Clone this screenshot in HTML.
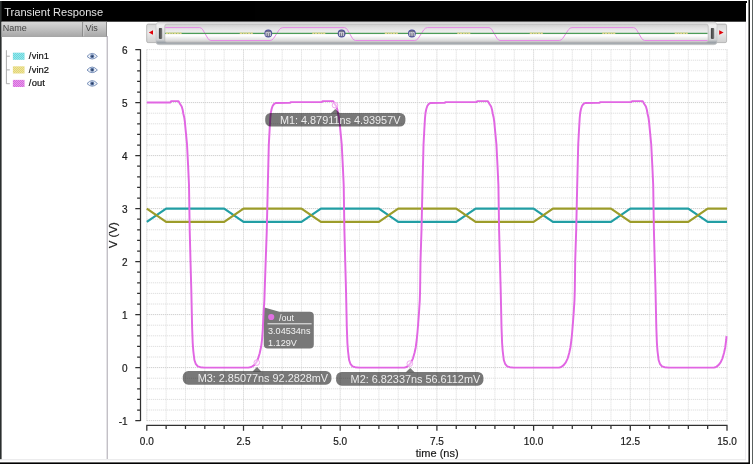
<!DOCTYPE html>
<html><head><meta charset="utf-8"><title>Transient Response</title>
<style>html,body{margin:0;padding:0;background:#fff;overflow:hidden}svg text{white-space:pre}</style></head>
<body>
<svg width="753" height="464" viewBox="0 0 753 464" style="display:block;will-change:transform;opacity:0.999">
<defs>
<linearGradient id="hdr" x1="0" y1="0" x2="0" y2="1"><stop offset="0" stop-color="#d8d8d8"/><stop offset="0.5" stop-color="#c0c0c0"/><stop offset="1" stop-color="#a6a6a6"/></linearGradient>
<linearGradient id="btn" x1="0" y1="0" x2="0" y2="1"><stop offset="0" stop-color="#d6d6d6"/><stop offset="0.45" stop-color="#ececec"/><stop offset="1" stop-color="#cfcfcf"/></linearGradient>
<linearGradient id="hnd" x1="0" y1="0" x2="0" y2="1"><stop offset="0" stop-color="#dcdcdc"/><stop offset="0.15" stop-color="#f0f0f0"/><stop offset="0.78" stop-color="#d0d2d4"/><stop offset="0.9" stop-color="#9ca2a8"/><stop offset="1" stop-color="#b0b4b8"/></linearGradient>
<linearGradient id="trk" x1="0" y1="0" x2="0" y2="1"><stop offset="0" stop-color="#cecece"/><stop offset="0.22" stop-color="#e2e2e2"/><stop offset="0.5" stop-color="#f0f0f0"/><stop offset="0.64" stop-color="#ffffff"/><stop offset="0.82" stop-color="#e6e6e6"/><stop offset="1" stop-color="#cccccc"/></linearGradient>
<linearGradient id="grip" x1="0" y1="0" x2="1" y2="0"><stop offset="0" stop-color="#3c3c3c"/><stop offset="1" stop-color="#787878"/></linearGradient>
<radialGradient id="mk" cx="0.5" cy="0.5" r="0.5"><stop offset="0" stop-color="#8c8c94"/><stop offset="0.62" stop-color="#74748a"/><stop offset="1" stop-color="#4646a0"/></radialGradient>
<pattern id="dot" width="2" height="2" patternUnits="userSpaceOnUse"><rect width="1" height="1" x="1" y="0" fill="#fff" opacity="0.35"/><rect width="1" height="1" x="0" y="1" fill="#fff" opacity="0.35"/></pattern>
</defs>
<rect width="753" height="464" fill="#fff"/>
<rect x="0" y="1" width="746" height="20.7" fill="#000"/>
<rect x="0" y="1" width="747" height="2" fill="#000"/>
<text x="4.2" y="16.4" font-size="11.1" fill="#e2e2e2" font-family="Liberation Sans, Arial, sans-serif">Transient Response</text>
<rect x="0" y="1" width="1.6" height="458.5" fill="#2a2e2e"/>
<rect x="745" y="22" width="1" height="438" fill="#f0eef2"/>
<rect x="748.4" y="0" width="1.6" height="464" fill="#111"/>
<rect x="748" y="0" width="0.5" height="464" fill="#888"/>
<rect x="752" y="0" width="1" height="464" fill="#5a605e"/>
<rect x="0" y="459.3" width="746" height="1" fill="#e4e4e6"/>
<rect x="0" y="462.4" width="750" height="1.6" fill="#000"/>
<rect x="1.6" y="21.8" width="105.4" height="15" fill="url(#hdr)"/>
<rect x="82.3" y="22" width="1" height="14.8" fill="#7c7c7c"/>
<rect x="83.3" y="22" width="0.8" height="14.8" fill="#d8d8d8"/>
<rect x="106" y="22" width="1" height="14.8" fill="#8c8c8c"/>
<rect x="1.6" y="36.2" width="105.4" height="0.6" fill="#9c9c9c"/>
<text x="2.8" y="31.1" font-size="9" fill="#444" font-family="Liberation Sans, Arial, sans-serif">Name</text>
<text x="85.4" y="31.1" font-size="9" fill="#444" font-family="Liberation Sans, Arial, sans-serif">Vis</text>
<rect x="106.7" y="36" width="1" height="423" fill="#aaa6ae"/>
<path d="M6.4 50.2 V83.8 M6.4 56.2 H9.8 M6.4 69.9 H9.8 M6.4 83.7 H9.8" stroke="#adadad" stroke-width="1" fill="none"/>
<rect x="12.9" y="52.70" width="11.6" height="7.1" fill="#66d8de"/>
<rect x="12.9" y="52.70" width="11.6" height="7.1" fill="url(#dot)"/>
<text x="28.8" y="59.10" font-size="9.4" fill="#111" stroke="#111" stroke-width="0.2" font-family="Liberation Sans, Arial, sans-serif">/<tspan dx="0.4">vin1</tspan></text>
<g transform="translate(92.2,56.2)"><path d="M-5.2 0.2 Q0 -5.8 5.2 0.2 Q0 5.4 -5.2 0.2Z" fill="#eef2f8" stroke="#6c86b2" stroke-width="0.9"/><circle cx="0" cy="0" r="2" fill="#5a76a6"/><circle cx="0" cy="0.1" r="0.9" fill="#2c3c5c"/></g>
<rect x="12.9" y="66.35" width="11.6" height="7.1" fill="#e4d672"/>
<rect x="12.9" y="66.35" width="11.6" height="7.1" fill="url(#dot)"/>
<text x="28.8" y="72.75" font-size="9.4" fill="#111" stroke="#111" stroke-width="0.2" font-family="Liberation Sans, Arial, sans-serif">/<tspan dx="0.4">vin2</tspan></text>
<g transform="translate(92.2,69.85)"><path d="M-5.2 0.2 Q0 -5.8 5.2 0.2 Q0 5.4 -5.2 0.2Z" fill="#eef2f8" stroke="#6c86b2" stroke-width="0.9"/><circle cx="0" cy="0" r="2" fill="#5a76a6"/><circle cx="0" cy="0.1" r="0.9" fill="#2c3c5c"/></g>
<rect x="12.9" y="79.90" width="11.6" height="7.1" fill="#d868de"/>
<rect x="12.9" y="79.90" width="11.6" height="7.1" fill="url(#dot)"/>
<text x="28.8" y="86.30" font-size="9.4" fill="#111" stroke="#111" stroke-width="0.2" font-family="Liberation Sans, Arial, sans-serif">/<tspan dx="0.4">out</tspan></text>
<g transform="translate(92.2,83.4)"><path d="M-5.2 0.2 Q0 -5.8 5.2 0.2 Q0 5.4 -5.2 0.2Z" fill="#eef2f8" stroke="#6c86b2" stroke-width="0.9"/><circle cx="0" cy="0" r="2" fill="#5a76a6"/><circle cx="0" cy="0.1" r="0.9" fill="#2c3c5c"/></g>
<rect x="146.7" y="24.1" width="12" height="18.5" rx="1.5" fill="url(#btn)" stroke="#aaa" stroke-width="0.8"/>
<rect x="714" y="24.1" width="12.6" height="18.5" rx="1.5" fill="url(#btn)" stroke="#aaa" stroke-width="0.8"/>
<path d="M148.8 32.5 L153 30.2 V34.8Z" fill="#e00008"/>
<path d="M723.6 32.5 L719.2 30.2 V34.8Z" fill="#e00008"/>
<rect x="156" y="22.2" width="561" height="22.5" rx="3" fill="url(#hnd)"/>
<rect x="156" y="22.2" width="561" height="22.5" rx="3" fill="none" stroke="#c2c4c6" stroke-width="0.6"/>
<rect x="164.8" y="24.2" width="543.4" height="18" rx="2" fill="url(#trk)" stroke="#b4b4b4" stroke-width="0.7"/>
<rect x="158.9" y="28" width="3.3" height="10.9" rx="0.8" fill="url(#grip)"/>
<rect x="710.9" y="28" width="3.3" height="10.9" rx="0.8" fill="url(#grip)"/>
<clipPath id="mclip"><rect x="165" y="24" width="542.9" height="19"/></clipPath>
<path d="M165.2 27.6 L199.8 27.6 Q201.4 27.6 202.8 29.8 L207.8 38.3 Q209.2 40.5 210.8 40.5 L270.1 40.5 Q271.9 40.5 273.5 38.5 L279.2 29.8 Q280.8 27.6 282.8 27.6 L344.4 27.6 Q346.0 27.6 347.4 29.8 L352.4 38.3 Q353.8 40.5 355.4 40.5 L414.7 40.5 Q416.5 40.5 418.1 38.5 L423.8 29.8 Q425.4 27.6 427.4 27.6 L489.0 27.6 Q490.6 27.6 492.0 29.8 L497.0 38.3 Q498.4 40.5 500.0 40.5 L559.3 40.5 Q561.1 40.5 562.7 38.5 L568.4 29.8 Q570.0 27.6 572.0 27.6 L633.6 27.6 Q635.2 27.6 636.6 29.8 L641.6 38.3 Q643.0 40.5 644.6 40.5 L707.5 40.5" fill="none" stroke="#e68ae6" stroke-width="1" clip-path="url(#mclip)"/>
<path d="M165.2 33.3 H707.5" stroke="#4c9c58" stroke-width="1.3" fill="none"/>
<path d="M165.9 33.2 H181.9" stroke="#e2d98c" stroke-width="1.4" stroke-dasharray="2.2 0.5" fill="none"/>
<path d="M239.8 33.2 H253.3" stroke="#e2d98c" stroke-width="1.4" stroke-dasharray="2.2 0.5" fill="none"/>
<path d="M312.3 33.2 H325.8" stroke="#e2d98c" stroke-width="1.4" stroke-dasharray="2.2 0.5" fill="none"/>
<path d="M384.8 33.2 H398.3" stroke="#e2d98c" stroke-width="1.4" stroke-dasharray="2.2 0.5" fill="none"/>
<path d="M457.3 33.2 H470.8" stroke="#e2d98c" stroke-width="1.4" stroke-dasharray="2.2 0.5" fill="none"/>
<path d="M529.8 33.2 H543.3" stroke="#e2d98c" stroke-width="1.4" stroke-dasharray="2.2 0.5" fill="none"/>
<path d="M602.3 33.2 H615.8" stroke="#e2d98c" stroke-width="1.4" stroke-dasharray="2.2 0.5" fill="none"/>
<path d="M674.7 33.2 H688.2" stroke="#e2d98c" stroke-width="1.4" stroke-dasharray="2.2 0.5" fill="none"/>
<circle cx="268.3" cy="33.5" r="3.9" fill="url(#mk)"/>
<text x="268.3" y="35.6" font-size="7.2" text-anchor="middle" fill="#ececf4" font-family="Liberation Sans, Arial, sans-serif">m</text>
<circle cx="341.6" cy="33.5" r="3.9" fill="url(#mk)"/>
<text x="341.6" y="35.6" font-size="7.2" text-anchor="middle" fill="#ececf4" font-family="Liberation Sans, Arial, sans-serif">m</text>
<circle cx="411.9" cy="33.5" r="3.9" fill="url(#mk)"/>
<text x="411.9" y="35.6" font-size="7.2" text-anchor="middle" fill="#ececf4" font-family="Liberation Sans, Arial, sans-serif">m</text>
<g stroke-width="1" stroke-dasharray="1 1" fill="none"><path d="M146.8 420.60 H727.3" stroke="#c4c4c4"/><path d="M146.8 410.00 H727.3" stroke="#d8d8d8"/><path d="M146.8 399.40 H727.3" stroke="#d8d8d8"/><path d="M146.8 388.80 H727.3" stroke="#d8d8d8"/><path d="M146.8 378.20 H727.3" stroke="#d8d8d8"/><path d="M146.8 367.60 H727.3" stroke="#c4c4c4"/><path d="M146.8 357.00 H727.3" stroke="#d8d8d8"/><path d="M146.8 346.40 H727.3" stroke="#d8d8d8"/><path d="M146.8 335.80 H727.3" stroke="#d8d8d8"/><path d="M146.8 325.20 H727.3" stroke="#d8d8d8"/><path d="M146.8 314.60 H727.3" stroke="#c4c4c4"/><path d="M146.8 304.00 H727.3" stroke="#d8d8d8"/><path d="M146.8 293.40 H727.3" stroke="#d8d8d8"/><path d="M146.8 282.80 H727.3" stroke="#d8d8d8"/><path d="M146.8 272.20 H727.3" stroke="#d8d8d8"/><path d="M146.8 261.60 H727.3" stroke="#c4c4c4"/><path d="M146.8 251.00 H727.3" stroke="#d8d8d8"/><path d="M146.8 240.40 H727.3" stroke="#d8d8d8"/><path d="M146.8 229.80 H727.3" stroke="#d8d8d8"/><path d="M146.8 219.20 H727.3" stroke="#d8d8d8"/><path d="M146.8 208.60 H727.3" stroke="#c4c4c4"/><path d="M146.8 198.00 H727.3" stroke="#d8d8d8"/><path d="M146.8 187.40 H727.3" stroke="#d8d8d8"/><path d="M146.8 176.80 H727.3" stroke="#d8d8d8"/><path d="M146.8 166.20 H727.3" stroke="#d8d8d8"/><path d="M146.8 155.60 H727.3" stroke="#c4c4c4"/><path d="M146.8 145.00 H727.3" stroke="#d8d8d8"/><path d="M146.8 134.40 H727.3" stroke="#d8d8d8"/><path d="M146.8 123.80 H727.3" stroke="#d8d8d8"/><path d="M146.8 113.20 H727.3" stroke="#d8d8d8"/><path d="M146.8 102.60 H727.3" stroke="#c4c4c4"/><path d="M146.8 92.00 H727.3" stroke="#d8d8d8"/><path d="M146.8 81.40 H727.3" stroke="#d8d8d8"/><path d="M146.8 70.80 H727.3" stroke="#d8d8d8"/><path d="M146.8 60.20 H727.3" stroke="#d8d8d8"/><path d="M146.8 49.60 H727.3" stroke="#d8d8d8"/><path d="M146.80 49.6 V420.6" stroke="#cacaca"/><path d="M166.14 49.6 V420.6" stroke="#d8d8d8"/><path d="M185.48 49.6 V420.6" stroke="#d8d8d8"/><path d="M204.82 49.6 V420.6" stroke="#d8d8d8"/><path d="M224.16 49.6 V420.6" stroke="#d8d8d8"/><path d="M243.50 49.6 V420.6" stroke="#cacaca"/><path d="M262.84 49.6 V420.6" stroke="#d8d8d8"/><path d="M282.18 49.6 V420.6" stroke="#d8d8d8"/><path d="M301.52 49.6 V420.6" stroke="#d8d8d8"/><path d="M320.86 49.6 V420.6" stroke="#d8d8d8"/><path d="M340.20 49.6 V420.6" stroke="#cacaca"/><path d="M359.54 49.6 V420.6" stroke="#d8d8d8"/><path d="M378.88 49.6 V420.6" stroke="#d8d8d8"/><path d="M398.22 49.6 V420.6" stroke="#d8d8d8"/><path d="M417.56 49.6 V420.6" stroke="#d8d8d8"/><path d="M436.90 49.6 V420.6" stroke="#cacaca"/><path d="M456.24 49.6 V420.6" stroke="#d8d8d8"/><path d="M475.58 49.6 V420.6" stroke="#d8d8d8"/><path d="M494.92 49.6 V420.6" stroke="#d8d8d8"/><path d="M514.26 49.6 V420.6" stroke="#d8d8d8"/><path d="M533.60 49.6 V420.6" stroke="#cacaca"/><path d="M552.94 49.6 V420.6" stroke="#d8d8d8"/><path d="M572.28 49.6 V420.6" stroke="#d8d8d8"/><path d="M591.62 49.6 V420.6" stroke="#d8d8d8"/><path d="M610.96 49.6 V420.6" stroke="#d8d8d8"/><path d="M630.30 49.6 V420.6" stroke="#cacaca"/><path d="M649.64 49.6 V420.6" stroke="#d8d8d8"/><path d="M668.98 49.6 V420.6" stroke="#d8d8d8"/><path d="M688.32 49.6 V420.6" stroke="#d8d8d8"/><path d="M707.66 49.6 V420.6" stroke="#d8d8d8"/><path d="M727.00 49.6 V420.6" stroke="#cacaca"/></g>
<path d="M140.5 49.3 V421.0 M140.5 420.60 H135.3 M140.5 410.00 H137.1 M140.5 399.40 H137.1 M140.5 388.80 H137.1 M140.5 378.20 H137.1 M140.5 367.60 H135.3 M140.5 357.00 H137.1 M140.5 346.40 H137.1 M140.5 335.80 H137.1 M140.5 325.20 H137.1 M140.5 314.60 H135.3 M140.5 304.00 H137.1 M140.5 293.40 H137.1 M140.5 282.80 H137.1 M140.5 272.20 H137.1 M140.5 261.60 H135.3 M140.5 251.00 H137.1 M140.5 240.40 H137.1 M140.5 229.80 H137.1 M140.5 219.20 H137.1 M140.5 208.60 H135.3 M140.5 198.00 H137.1 M140.5 187.40 H137.1 M140.5 176.80 H137.1 M140.5 166.20 H137.1 M140.5 155.60 H135.3 M140.5 145.00 H137.1 M140.5 134.40 H137.1 M140.5 123.80 H137.1 M140.5 113.20 H137.1 M140.5 102.60 H135.3 M140.5 92.00 H137.1 M140.5 81.40 H137.1 M140.5 70.80 H137.1 M140.5 60.20 H137.1 M140.5 49.60 H135.3 M146.3 425.3 H727.6 M146.80 425.3 V430.8 M166.14 425.3 V428.9 M185.48 425.3 V428.9 M204.82 425.3 V428.9 M224.16 425.3 V428.9 M243.50 425.3 V430.8 M262.84 425.3 V428.9 M282.18 425.3 V428.9 M301.52 425.3 V428.9 M320.86 425.3 V428.9 M340.20 425.3 V430.8 M359.54 425.3 V428.9 M378.88 425.3 V428.9 M398.22 425.3 V428.9 M417.56 425.3 V428.9 M436.90 425.3 V430.8 M456.24 425.3 V428.9 M475.58 425.3 V428.9 M494.92 425.3 V428.9 M514.26 425.3 V428.9 M533.60 425.3 V430.8 M552.94 425.3 V428.9 M572.28 425.3 V428.9 M591.62 425.3 V428.9 M610.96 425.3 V428.9 M630.30 425.3 V430.8 M649.64 425.3 V428.9 M668.98 425.3 V428.9 M688.32 425.3 V428.9 M707.66 425.3 V428.9 M727.00 425.3 V430.8" stroke="#303030" stroke-width="1.25" fill="none"/>
<text x="127.6" y="424.5" font-size="10" text-anchor="end" fill="#1a1a1a" stroke="#1a1a1a" stroke-width="0.2" font-family="Liberation Sans, Arial, sans-serif">-1</text>
<text x="127.6" y="371.5" font-size="10" text-anchor="end" fill="#1a1a1a" stroke="#1a1a1a" stroke-width="0.2" font-family="Liberation Sans, Arial, sans-serif">0</text>
<text x="127.6" y="318.5" font-size="10" text-anchor="end" fill="#1a1a1a" stroke="#1a1a1a" stroke-width="0.2" font-family="Liberation Sans, Arial, sans-serif">1</text>
<text x="127.6" y="265.5" font-size="10" text-anchor="end" fill="#1a1a1a" stroke="#1a1a1a" stroke-width="0.2" font-family="Liberation Sans, Arial, sans-serif">2</text>
<text x="127.6" y="212.5" font-size="10" text-anchor="end" fill="#1a1a1a" stroke="#1a1a1a" stroke-width="0.2" font-family="Liberation Sans, Arial, sans-serif">3</text>
<text x="127.6" y="159.5" font-size="10" text-anchor="end" fill="#1a1a1a" stroke="#1a1a1a" stroke-width="0.2" font-family="Liberation Sans, Arial, sans-serif">4</text>
<text x="127.6" y="106.5" font-size="10" text-anchor="end" fill="#1a1a1a" stroke="#1a1a1a" stroke-width="0.2" font-family="Liberation Sans, Arial, sans-serif">5</text>
<text x="127.6" y="53.5" font-size="10" text-anchor="end" fill="#1a1a1a" stroke="#1a1a1a" stroke-width="0.2" font-family="Liberation Sans, Arial, sans-serif">6</text>
<text x="146.8" y="444.8" font-size="10" text-anchor="middle" fill="#1a1a1a" stroke="#1a1a1a" stroke-width="0.2" font-family="Liberation Sans, Arial, sans-serif">0.0</text>
<text x="243.5" y="444.8" font-size="10" text-anchor="middle" fill="#1a1a1a" stroke="#1a1a1a" stroke-width="0.2" font-family="Liberation Sans, Arial, sans-serif">2.5</text>
<text x="340.2" y="444.8" font-size="10" text-anchor="middle" fill="#1a1a1a" stroke="#1a1a1a" stroke-width="0.2" font-family="Liberation Sans, Arial, sans-serif">5.0</text>
<text x="436.9" y="444.8" font-size="10" text-anchor="middle" fill="#1a1a1a" stroke="#1a1a1a" stroke-width="0.2" font-family="Liberation Sans, Arial, sans-serif">7.5</text>
<text x="533.6" y="444.8" font-size="10" text-anchor="middle" fill="#1a1a1a" stroke="#1a1a1a" stroke-width="0.2" font-family="Liberation Sans, Arial, sans-serif">10.0</text>
<text x="630.3" y="444.8" font-size="10" text-anchor="middle" fill="#1a1a1a" stroke="#1a1a1a" stroke-width="0.2" font-family="Liberation Sans, Arial, sans-serif">12.5</text>
<text x="727.0" y="444.8" font-size="10" text-anchor="middle" fill="#1a1a1a" stroke="#1a1a1a" stroke-width="0.2" font-family="Liberation Sans, Arial, sans-serif">15.0</text>
<text x="437.2" y="457.2" font-size="11" text-anchor="middle" fill="#1a1a1a" stroke="#1a1a1a" stroke-width="0.2" font-family="Liberation Sans, Arial, sans-serif">time (ns)</text>
<text transform="translate(117.3,235.2) rotate(-90)" font-size="11.5" text-anchor="middle" fill="#1a1a1a" stroke="#1a1a1a" stroke-width="0.2" font-family="Liberation Sans, Arial, sans-serif">V (V)</text>
<path d="M146.8 221.9 L146.8 221.9 L166.1 208.6 L224.2 208.6 L243.5 221.9 L301.5 221.9 L320.9 208.6 L378.9 208.6 L398.2 221.9 L456.2 221.9 L475.6 208.6 L533.6 208.6 L552.9 221.9 L611.0 221.9 L630.3 208.6 L688.3 208.6 L707.7 221.9 L727.0 221.9" fill="none" stroke="#229ea4" stroke-width="2.2" stroke-linejoin="round"/>
<path d="M146.8 208.6 L146.8 208.6 L166.1 221.9 L224.2 221.9 L243.5 208.6 L301.5 208.6 L320.9 221.9 L378.9 221.9 L398.2 208.6 L456.2 208.6 L475.6 221.9 L533.6 221.9 L552.9 208.6 L611.0 208.6 L630.3 221.9 L688.3 221.9 L707.7 208.6 L727.0 208.6" fill="none" stroke="#9c9c2a" stroke-width="2.2" stroke-linejoin="round"/>
<path d="M263.6 307.3 L279.3 311.8 H309.8 Q313.8 311.8 313.8 315.8 V344.4 Q313.8 348.4 309.8 348.4 H267.8 Q263.8 348.4 263.8 344.4Z" fill="#787878"/>
<path d="M146.8 102.4 L170.4 102.4 L171.2 101.1 L178.5 101.1 L180.1 104.0 L181.7 106.5 L182.7 110.0 L183.4 114.0 L184.3 117.8 L184.9 122.0 L185.3 126.7 L187.0 144.0 L188.1 165.5 L189.0 185.0 L189.7 230.0 L190.5 261.0 L191.3 290.0 L192.1 327.0 L192.7 343.0 L193.3 351.0 L194.4 360.0 L195.7 363.8 L197.8 366.3 L200.4 367.2 L204.4 367.6 L248.3 367.6 L251.3 367.0 L254.2 365.2 L256.3 362.5 L258.1 358.5 L259.7 353.2 L261.1 346.8 L262.1 339.0 L262.8 329.0 L263.6 312.0 L264.4 300.0 L264.7 290.0 L265.7 261.0 L266.8 230.0 L267.7 190.0 L268.8 145.0 L269.6 130.0 L270.3 118.0 L270.8 113.0 L271.6 109.0 L272.6 106.0 L273.9 104.1 L275.7 103.0 L289.8 102.9 L291.0 102.1 L321.8 102.1 L322.6 101.1 L333.2 101.1 L334.8 104.0 L336.4 106.5 L337.4 110.0 L338.1 114.0 L339.0 117.8 L339.6 122.0 L340.0 126.7 L341.7 144.0 L342.8 165.5 L343.7 185.0 L344.4 230.0 L345.2 261.0 L346.0 290.0 L346.8 327.0 L347.4 343.0 L348.0 351.0 L349.1 360.0 L350.4 363.8 L352.5 366.3 L355.1 367.2 L359.1 367.6 L404.3 367.6 L406.5 367.0 L409.0 365.1 L411.1 362.4 L413.0 358.3 L414.5 353.0 L415.7 347.5 L416.7 340.0 L417.5 332.0 L418.3 322.0 L419.1 311.0 L419.8 300.0 L420.1 290.0 L420.5 261.0 L421.5 230.0 L422.4 190.0 L423.5 145.0 L424.3 130.0 L425.0 118.0 L425.5 113.0 L426.3 109.0 L427.3 106.0 L428.6 104.1 L430.4 103.0 L444.5 102.9 L445.7 102.1 L476.5 102.1 L477.3 101.1 L487.9 101.1 L489.5 104.0 L491.1 106.5 L492.1 110.0 L492.8 114.0 L493.7 117.8 L494.3 122.0 L494.7 126.7 L496.4 144.0 L497.5 165.5 L498.4 185.0 L499.1 230.0 L499.9 261.0 L500.7 290.0 L501.5 327.0 L502.1 343.0 L502.7 351.0 L503.8 360.0 L505.1 363.8 L507.2 366.3 L509.8 367.2 L513.8 367.6 L559.0 367.6 L561.2 367.0 L563.7 365.1 L565.8 362.4 L567.7 358.3 L569.2 353.0 L570.4 347.5 L571.4 340.0 L572.2 332.0 L573.0 322.0 L573.8 311.0 L574.5 300.0 L574.8 290.0 L575.2 261.0 L576.2 230.0 L577.1 190.0 L578.2 145.0 L579.0 130.0 L579.7 118.0 L580.2 113.0 L581.0 109.0 L582.0 106.0 L583.3 104.1 L585.1 103.0 L599.2 102.9 L600.4 102.1 L631.3 102.1 L632.1 101.1 L642.7 101.1 L644.3 104.0 L645.9 106.5 L646.9 110.0 L647.6 114.0 L648.5 117.8 L649.1 122.0 L649.5 126.7 L651.2 144.0 L652.3 165.5 L653.2 185.0 L653.9 230.0 L654.7 261.0 L655.5 290.0 L656.3 327.0 L656.9 343.0 L657.5 351.0 L658.6 360.0 L659.9 363.8 L662.0 366.3 L664.6 367.2 L668.6 367.6 L713.8 367.6 L716.0 367.0 L718.5 365.1 L720.6 362.4 L722.5 358.3 L724.0 353.0 L725.2 347.5 L726.2 340.0 L726.5 336.1" fill="none" stroke="#e166e3" stroke-width="1.95" stroke-linejoin="round"/>
<rect x="265.2" y="113" width="140.2" height="13.5" rx="5.5" fill="#000" fill-opacity="0.53"/>
<path d="M330.9 113.3 L335.3 108.9 L339.8 113.3Z" fill="#000" fill-opacity="0.53"/>
<text x="279.9" y="123.7" font-size="10.87" fill="#ececec" font-family="Liberation Sans, Arial, sans-serif">M1: 4.87911ns 4.93957V</text>
<rect x="182.8" y="371.1" width="148.6" height="13.6" rx="5.5" fill="#000" fill-opacity="0.53"/>
<path d="M252.6 371.4 L257 367 L261.4 371.4Z" fill="#000" fill-opacity="0.53"/>
<text x="197.7" y="381.7" font-size="10.87" fill="#ececec" font-family="Liberation Sans, Arial, sans-serif">M3: 2.85077ns 92.2828mV</text>
<rect x="336.1" y="372" width="147.3" height="13.7" rx="5.5" fill="#000" fill-opacity="0.53"/>
<path d="M405.8 372.3 L410.2 368 L414.6 372.3Z" fill="#000" fill-opacity="0.53"/>
<text x="350.6" y="383.0" font-size="10.87" fill="#ececec" font-family="Liberation Sans, Arial, sans-serif">M2: 6.82337ns 56.6112mV</text>
<circle cx="335.0" cy="105.2" r="2.8" fill="#fff" fill-opacity="0.5" stroke="#f0a8ee" stroke-width="1"/>
<circle cx="256.8" cy="362.6" r="2.8" fill="#fff" fill-opacity="0.5" stroke="#f0a8ee" stroke-width="1"/>
<circle cx="409.8" cy="363.6" r="2.8" fill="#fff" fill-opacity="0.5" stroke="#f0a8ee" stroke-width="1"/>
<circle cx="271.2" cy="317" r="3.1" fill="#e070e2"/>
<text x="279" y="320.6" font-size="9" fill="#f4f4f4" font-family="Liberation Sans, Arial, sans-serif">/out</text>
<rect x="267.5" y="323.3" width="44.1" height="1" fill="#f0f0f0"/>
<text x="268" y="333.5" font-size="9.1" fill="#f4f4f4" font-family="Liberation Sans, Arial, sans-serif">3.04534ns</text>
<text x="268" y="345.9" font-size="9.1" fill="#f4f4f4" font-family="Liberation Sans, Arial, sans-serif">1.129V</text>
</svg>
</body></html>
